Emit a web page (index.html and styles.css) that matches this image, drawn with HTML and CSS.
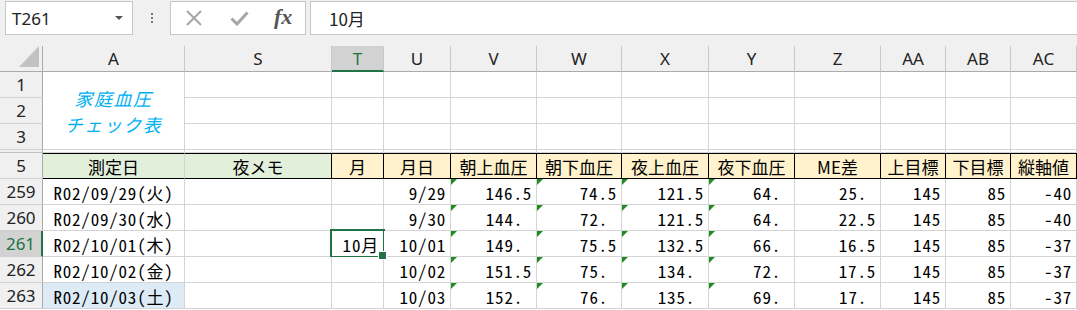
FILE: index.html
```html
<!DOCTYPE html>
<html lang="ja">
<head>
<meta charset="utf-8">
<title>家庭血圧チェック表</title>
<link rel="stylesheet" href="styles.css">
</head>
<body>
<div class="toolbar">
  <div class="namebox"><span class="nb-text">T261</span><span class="nb-arrow"></span></div>
  <div class="dots"><i></i><i></i><i></i></div>
  <div class="fbuttons">
    <svg class="ico-x" width="18" height="16" viewBox="0 0 18 16"><path d="M2 1 L16 15 M16 1 L2 15" stroke="#a6a6a6" stroke-width="2" fill="none"/></svg>
    <svg class="ico-ok" width="19" height="15" viewBox="0 0 19 15"><path d="M1.5 7.5 L7 13 L17.5 1.5" stroke="#a6a6a6" stroke-width="3" fill="none"/></svg>
    <span class="fx">fx</span>
  </div>
  <div class="fbar">10月</div>
</div>

<div class="sheet">
  <!-- column headers -->
  <div class="corner"><span class="tri"></span></div>
  <div class="ch">A</div><div class="ch">S</div><div class="ch sel">T</div><div class="ch">U</div><div class="ch">V</div><div class="ch">W</div><div class="ch">X</div><div class="ch">Y</div><div class="ch">Z</div><div class="ch">AA</div><div class="ch">AB</div><div class="ch">AC</div>

  <!-- row 1 -->
  <div class="rh">1</div>
  <div class="c title"><span>家庭血圧</span><span>チェック表</span></div>
  <div class="c"></div><div class="c"></div><div class="c"></div><div class="c"></div><div class="c"></div><div class="c"></div><div class="c"></div><div class="c"></div><div class="c"></div><div class="c"></div><div class="c"></div>
  <!-- row 2 -->
  <div class="rh">2</div>
  <div class="c"></div><div class="c"></div><div class="c"></div><div class="c"></div><div class="c"></div><div class="c"></div><div class="c"></div><div class="c"></div><div class="c"></div><div class="c"></div><div class="c"></div>
  <!-- row 3 -->
  <div class="rh">3</div>
  <div class="c"></div><div class="c"></div><div class="c"></div><div class="c"></div><div class="c"></div><div class="c"></div><div class="c"></div><div class="c"></div><div class="c"></div><div class="c"></div><div class="c"></div>
  <!-- hidden row 4 -->
  <div class="rh hid"></div>
  <div class="c"></div><div class="c"></div><div class="c"></div><div class="c"></div><div class="c"></div><div class="c"></div><div class="c"></div><div class="c"></div><div class="c"></div><div class="c"></div><div class="c"></div><div class="c"></div>
  <!-- row 5 -->
  <div class="rh">5</div>
  <div class="c h5 g">測定日</div><div class="c h5 g gs">夜メモ</div><div class="c h5 y">月</div><div class="c h5 y">月日</div><div class="c h5 y">朝上血圧</div><div class="c h5 y">朝下血圧</div><div class="c h5 y">夜上血圧</div><div class="c h5 y">夜下血圧</div><div class="c h5 y">ME差</div><div class="c h5 y">上目標</div><div class="c h5 y">下目標</div><div class="c h5 y">縦軸値</div>

  <!-- 259 -->
  <div class="rh">259</div>
  <div class="c d ctr">R02/09/29(火)</div><div class="c"></div><div class="c"></div>
  <div class="c d r">9/29</div><div class="c d r err">146.5</div><div class="c d r err">74.5</div><div class="c d r err">121.5</div><div class="c d r err dp">64.</div><div class="c d r dp">25.</div><div class="c d r">145</div><div class="c d r">85</div><div class="c d r">-40</div>
  <!-- 260 -->
  <div class="rh">260</div>
  <div class="c d ctr">R02/09/30(水)</div><div class="c"></div><div class="c"></div>
  <div class="c d r">9/30</div><div class="c d r err dp">144.</div><div class="c d r err dp">72.</div><div class="c d r err">121.5</div><div class="c d r err dp">64.</div><div class="c d r">22.5</div><div class="c d r">145</div><div class="c d r">85</div><div class="c d r">-40</div>
  <!-- 261 -->
  <div class="rh rsel">261</div>
  <div class="c d ctr">R02/10/01(木)</div><div class="c"></div><div class="c d r active">10月</div>
  <div class="c d r">10/01</div><div class="c d r err dp">149.</div><div class="c d r err">75.5</div><div class="c d r err">132.5</div><div class="c d r err dp">66.</div><div class="c d r">16.5</div><div class="c d r">145</div><div class="c d r">85</div><div class="c d r">-37</div>
  <!-- 262 -->
  <div class="rh">262</div>
  <div class="c d ctr">R02/10/02(金)</div><div class="c"></div><div class="c"></div>
  <div class="c d r">10/02</div><div class="c d r err">151.5</div><div class="c d r err dp">75.</div><div class="c d r err dp">134.</div><div class="c d r err dp">72.</div><div class="c d r">17.5</div><div class="c d r">145</div><div class="c d r">85</div><div class="c d r">-37</div>
  <!-- 263 -->
  <div class="rh">263</div>
  <div class="c d ctr blue">R02/10/03(土)</div><div class="c"></div><div class="c"></div>
  <div class="c d r">10/03</div><div class="c d r err dp">152.</div><div class="c d r err dp">76.</div><div class="c d r err dp">135.</div><div class="c d r err dp">69.</div><div class="c d r dp">17.</div><div class="c d r">145</div><div class="c d r">85</div><div class="c d r">-37</div>
</div>
</body>
</html>
```

FILE: styles.css
```css
* { box-sizing: border-box; }
html, body { margin: 0; padding: 0; }
body {
  width: 1077px;
  height: 310px;
  overflow: hidden;
  background: #ffffff;
  font-family: "Noto Sans", "Noto Sans CJK JP", sans-serif;
  color: #222;
}

/* ---------- formula bar ---------- */
.toolbar {
  height: 46px;
  background: #f0f0f0;
  display: flex;
  align-items: flex-start;
  padding-top: 1px;
}
.namebox {
  margin-left: 5px;
  width: 128px;
  height: 34px;
  background: #fff;
  border: 1px solid #c6c6c6;
  display: flex;
  align-items: center;
  justify-content: space-between;
  padding: 0 9px 0 6px;
  font-size: 17px;
  color: #222;
}
.nb-arrow {
  width: 0; height: 0;
  border-left: 4px solid transparent;
  border-right: 4px solid transparent;
  border-top: 4px solid #555;
}
.dots {
  width: 37px;
  height: 34px;
  display: flex;
  flex-direction: column;
  align-items: center;
  justify-content: center;
  gap: 2px;
}
.dots i {
  display: block;
  width: 2px; height: 2px;
  background: #777;
}
.fbuttons {
  width: 136px;
  height: 34px;
  background: #fff;
  border: 1px solid #c6c6c6;
  display: flex;
  align-items: center;
  padding-left: 14px;
}
.ico-x { margin-right: 27px; }
.ico-ok { margin-right: 25px; }
.fx {
  font-family: "Liberation Serif", serif;
  font-style: italic;
  font-weight: bold;
  font-size: 22px;
  color: #555;
  margin-top: -2px;
}
.fbar {
  margin-left: 4px;
  flex: 1;
  height: 34px;
  background: #fff;
  border: 1px solid #c6c6c6;
  border-right: none;
  display: flex;
  align-items: center;
  padding-left: 18px;
  font-family: "Noto Sans CJK JP", sans-serif;
  font-size: 17px;
  color: #222;
}

/* ---------- sheet grid ---------- */
.sheet {
  display: grid;
  grid-template-columns: 43px 142px 147px 52px 67px 86px 85px 87px 86px 86px 65px 65px 66px;
  grid-template-rows: 26px 26px 26px 26px 3px 26px repeat(5, 26px);
}
.corner {
  background: #f0f0f0;
  border-right: 1px solid #ababab;
  border-bottom: 1px solid #ababab;
  position: relative;
}
.corner .tri {
  position: absolute;
  right: 3px;
  bottom: 4px;
  width: 0; height: 0;
  border-left: 20px solid transparent;
  border-bottom: 21px solid #c2c2c2;
}
.ch {
  background: #f0f0f0;
  border-right: 1px solid #c8c8c8;
  border-bottom: 1px solid #ababab;
  display: flex;
  align-items: center;
  justify-content: center;
  font-size: 17px;
  color: #222;
}
.ch.sel {
  background: #d2d2d2;
  color: #217346;
  border-bottom: 2px solid #217346;
}
.rh {
  background: #f0f0f0;
  border-right: 1px solid #ababab;
  border-bottom: 1px solid #d0d0d0;
  display: flex;
  align-items: center;
  justify-content: center;
  font-size: 17px;
  color: #222;
}
.rh.rsel {
  background: #d2d2d2;
  color: #217346;
  border-right: 2px solid #217346;
}
.rh.hid { border-bottom-color: #c0c0c0; }

.c {
  background: #fff;
  border-right: 1px solid #d4d4d4;
  border-bottom: 1px solid #d4d4d4;
  position: relative;
  display: flex;
  align-items: center;
  white-space: nowrap;
  font-family: "Noto Sans CJK JP", sans-serif;
  font-size: 17px;
  color: #000;
}
.title {
  grid-row: span 3;
  flex-direction: column;
  justify-content: center;
  font-style: italic;
  font-size: 18px;
  letter-spacing: 1.5px;
  line-height: 26px;
  color: #00b0f0;
  padding-top: 0;
}
.h5 {
  justify-content: center;
  border-top: 1px solid #000;
  border-bottom: 1px solid #000;
  font-size: 17px;
  padding-top: 1px;
}
.h5.g { background: #e2efda; }
.h5.gs { border-right-color: #000; }
.h5.y { background: #fff2cc; border-right-color: #000; }

.d {
  font-feature-settings: "hwid" 1;
  letter-spacing: 0.8px;
  padding-top: 1px;
}
.ctr { justify-content: center; }
.r { justify-content: flex-end; padding-right: 4px; }
.r.dp { padding-right: 13px; }
.blue { background: #ddebf7; }

.err::before {
  content: "";
  position: absolute;
  left: 0;
  top: 0;
  width: 0; height: 0;
  border-top: 6px solid #1e8c1e;
  border-right: 6px solid transparent;
}

.active::after {
  content: "";
  position: absolute;
  left: -2px;
  top: -2px;
  right: -2px;
  bottom: -2px;
  border: 2px solid #217346;
  pointer-events: none;
}
.active::before {
  content: "";
  position: absolute;
  right: -4px;
  bottom: -4px;
  width: 7px;
  height: 7px;
  background: #217346;
  border: 1px solid #fff;
  z-index: 2;
}
```
